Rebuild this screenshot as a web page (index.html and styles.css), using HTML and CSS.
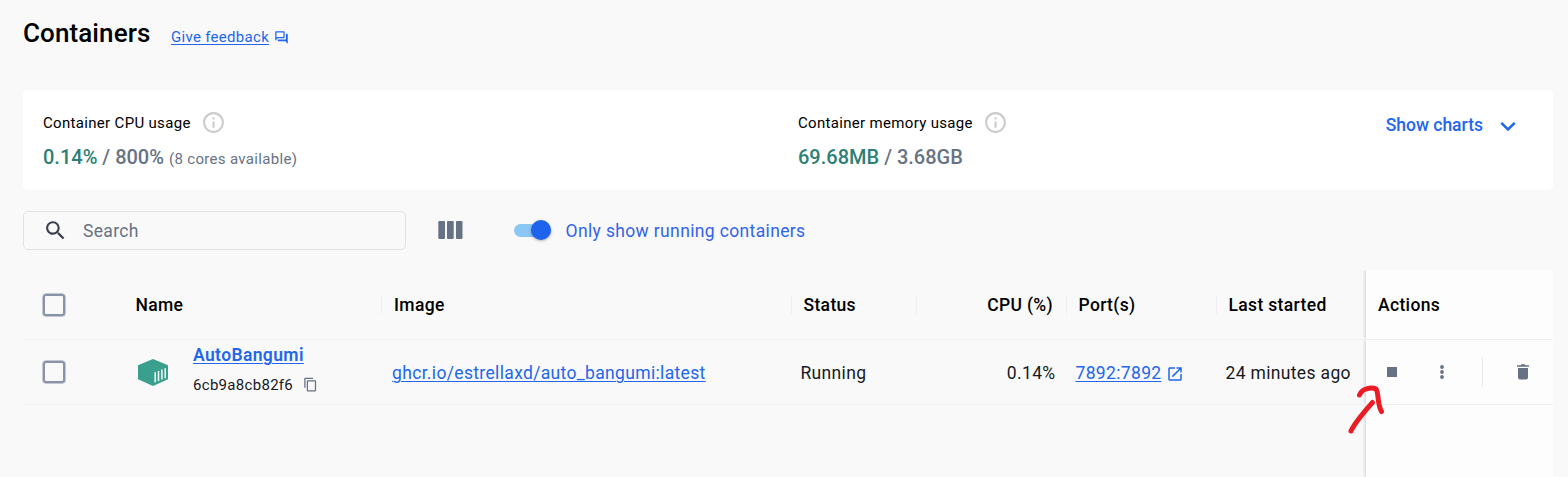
FILE: index.html
```html
<!DOCTYPE html>
<html lang="en">
<head>
<meta charset="utf-8">
<title>Containers</title>
<link rel="stylesheet" href="styles.css">
</head>
<body>
<main class="page">
  <header class="heading">
    <h1 class="title">Containers</h1>
    <a class="feedback" href="#">Give feedback</a>
    <svg class="feedback-icon" width="15" height="15" viewBox="0 0 24 24"><path d="M15 4v7H5.170L4 12.170V4h11m1-2H3c-.55 0-1 .45-1 1v14l4-4h10c.55 0 1-.45 1-1V3c0-.55-.45-1-1-1zm5 4h-2v9H6v2c0 .55.45 1 1 1h11l4 4V7c0-.55-.45-1-1-1z"/></svg>
  </header>

  <section class="usage">
    <div class="metric metric-cpu">
      <div class="metric-label"><span>Container CPU usage</span>
        <svg class="info" width="25" height="25" viewBox="0 0 24 24"><path d="M11 7h2v2h-2zm0 4h2v6h-2zm1-9C6.480 2 2 6.480 2 12s4.480 10 10 10 10-4.480 10-10S17.520 2 12 2zm0 18c-4.410 0-8-3.590-8-8s3.590-8 8-8 8 3.590 8 8-3.590 8-8 8z"/></svg>
      </div>
      <div class="metric-value"><span><b class="used">0.14%</b> / 800%</span><span class="cores">(8 cores available)</span></div>
    </div>
    <div class="metric">
      <div class="metric-label"><span>Container memory usage</span>
        <svg class="info" width="25" height="25" viewBox="0 0 24 24"><path d="M11 7h2v2h-2zm0 4h2v6h-2zm1-9C6.480 2 2 6.480 2 12s4.480 10 10 10 10-4.480 10-10S17.520 2 12 2zm0 18c-4.410 0-8-3.590-8-8s3.590-8 8-8 8 3.590 8 8-3.590 8-8 8z"/></svg>
      </div>
      <div class="metric-value"><span><b class="used">69.68MB</b> / 3.68GB</span></div>
    </div>
    <button class="show-charts"><span>Show charts</span>
      <svg width="25" height="25" viewBox="0 0 25 25"><path d="M5.300 9.800 12 16.500l6.700-6.700" fill="none" stroke="#2266ee" stroke-width="2.600"/></svg>
    </button>
  </section>

  <div class="toolbar">
    <div class="search">
      <svg width="25" height="25" viewBox="0 0 24 24"><path d="M15.500 14h-.79l-.28-.27C15.410 12.590 16 11.110 16 9.500 16 5.910 13.090 3 9.500 3S3 5.910 3 9.500 5.910 16 9.500 16c1.610 0 3.090-.59 4.230-1.570l.27.28v.79l5 4.990L20.490 19l-4.990-5zm-6 0C7.010 14 5 11.990 5 9.500S7.010 5 9.500 5 14 7.010 14 9.500 11.990 14 9.500 14z"/></svg>
      <span>Search</span>
    </div>
    <svg class="columns-icon" width="25" height="18" viewBox="0 0 25 18"><rect x=".3" width="6.700" height="18" rx="1"/><rect x="9" width="6.700" height="18" rx="1"/><rect x="18" width="6.500" height="18" rx="1"/></svg>
    <div class="switch"><span class="thumb"></span></div>
    <span class="switch-label">Only show running containers</span>
  </div>

  <div class="table">
    <div class="row head">
      <div class="cell check"><span class="box"></span></div>
      <div class="cell"><span>Name</span></div>
      <div class="cell sep"><span>Image</span></div>
      <div class="cell sep"><span>Status</span></div>
      <div class="cell sep right"><span>CPU (%)</span></div>
      <div class="cell sep"><span>Port(s)</span></div>
      <div class="cell sep"><span>Last started</span></div>
      <div class="cell pinned">Actions</div>
    </div>
    <div class="row body">
      <div class="cell check"><span class="box"></span></div>
      <div class="cell name-cell">
        <svg class="cube" width="30" height="27" viewBox="0 0 30 27"><path fill="#3aa08d" d="M15 0 30 6.300V20.300L15 27 0 20.300V6.300z"/><path stroke="#f9f9f9" stroke-width="1.500" d="M17.200 13.300v10M20.500 12v10M23.900 10.500v10M27.200 9.200v10"/></svg>
        <div class="name-lines">
          <a class="name" href="#">AutoBangumi</a>
          <div class="id-line"><span>6cb9a8cb82f6</span>
            <svg width="15" height="15" viewBox="0 0 24 24"><path d="M16 1H4c-1.100 0-2 .9-2 2v14h2V3h12V1zm3 4H8c-1.100 0-2 .9-2 2v14c0 1.100.9 2 2 2h11c1.100 0 2-.9 2-2V7c0-1.100-.9-2-2-2zm0 16H8V7h11v14z"/></svg>
          </div>
        </div>
      </div>
      <div class="cell text image-cell"><a href="#">ghcr.io/estrellaxd/auto_bangumi:latest</a></div>
      <div class="cell text"><span>Running</span></div>
      <div class="cell text right">0.14%</div>
      <div class="cell text ports"><a href="#">7892:7892</a>
        <svg width="18" height="18" viewBox="0 0 24 24"><path d="M19 19H5V5h7V3H5c-1.110 0-2 .9-2 2v14c0 1.100.89 2 2 2h14c1.100 0 2-.9 2-2v-7h-2v7zM14 3v2h3.590l-9.830 9.830 1.410 1.410L19 6.410V10h2V3h-7z"/></svg>
      </div>
      <div class="cell text"><span>24 minutes ago</span></div>
      <div class="cell pinned actions">
        <svg class="stop" width="10" height="10" viewBox="0 0 10 10"><rect width="10" height="10"/></svg>
        <svg class="more" width="4" height="14" viewBox="0 0 4 14"><circle cx="2" cy="2" r="1.900"/><circle cx="2" cy="7" r="1.900"/><circle cx="2" cy="12" r="1.900"/></svg>
        <span class="rule"></span>
        <svg class="trash" width="12" height="16" viewBox="0 0 12 16"><path d="M1 4h10v9.500c0 1.100-.7 1.900-1.800 1.900H2.800C1.700 15.400 1 14.600 1 13.500zM0 1.200h3.500L4.300.3h3.400l.8.900H12v1.600H0z"/></svg>
      </div>
    </div>
    <div class="row filler"><div class="cell pinned"></div></div>
  </div>
</main>
<svg class="arrow" width="40" height="54" viewBox="0 0 40 54"><path d="M5 47C9 38 18 28 26.500 18.500M13.500 11C16 4 26 3 30 5C33 9 31 20 35.500 27.500"/></svg>
</body>
</html>
```
FILE: styles.css
```css
* { box-sizing: border-box; }
body {
  margin: 0;
  height: 477px;
  overflow: hidden;
  background: #f9f9f9;
  color: #17191e;
  font-family: Roboto, sans-serif;
  font-size: 17.5px;
  white-space: nowrap;
}
a { color: #2266ee; text-decoration: underline; text-underline-offset: 2px; text-decoration-thickness: 1px; }
svg { display: block; flex: none; fill: #677285; }
.page { padding: 0 15px 0 23px; height: 477px; display: flex; flex-direction: column; }

.heading { height: 90px; display: flex; align-items: flex-start; padding-top: 18px; }
.title { margin: 0; font-size: 26px; line-height: 31px; font-weight: 500; color: #000; width: 148px; letter-spacing: .1px; }
.feedback { font-size: 15px; line-height: 20px; margin-top: 9px; letter-spacing: .3px; }
.feedback-icon { margin: 12px 0 0 5px; fill: #2266ee; }

.usage { height: 100px; background: #fff; border-radius: 5px; display: flex; padding: 20px; }
.metric-cpu { width: 755px; }
.metric-label { display: flex; align-items: center; height: 25px; gap: 10px; font-size: 15px; color: #000; letter-spacing: .32px; }
.info { fill: #cbcbcb; }
.metric-value { display: flex; align-items: baseline; margin-top: 9px; line-height: 26px; font-size: 20px; font-weight: 500; color: #677285; }
.used { font-weight: 500; color: #2e7f74; }
.cores { font-size: 15px; font-weight: 400; margin-left: 5px; letter-spacing: .33px; }
.show-charts { margin-left: auto; margin-right: 12px; border: 0; background: none; padding: 0; font: 500 17.5px Roboto, sans-serif; color: #2266ee; display: flex; gap: 13px; height: 30px; align-items: center; }

.toolbar { display: flex; align-items: center; height: 39px; margin-top: 21px; }
.search { width: 383px; height: 39px; border: 1px solid #e1e2e6; border-radius: 5px; display: flex; align-items: center; padding-left: 19px; gap: 15px; color: #677285; letter-spacing: .35px; }
.search svg { fill: #393f49; }
.columns-icon { margin: 0 0 1px 32px; }
.switch { width: 37px; height: 13px; border-radius: 7px; background: #8bc7f5; margin: 0 0 1px 51px; display: flex; justify-content: flex-end; align-items: center; }
.thumb { width: 20px; height: 20px; flex: none; border-radius: 50%; background: #1d63ed; box-shadow: 0 1px 3px rgba(0,0,0,.3); }
.switch-label { margin-left: 14.5px; color: #3363ec; letter-spacing: .36px; }

.table { margin-top: 20px; flex: 1; display: flex; flex-direction: column; letter-spacing: .34px; }
.row { display: grid; grid-template-columns: 100px 258px 409.5px 125px 150px 150px 150.5px 187px; }
.head { height: 70px; border-bottom: 1px solid #f1f1f2; font-weight: 500; color: #000; }
.body { height: 65px; border-bottom: 1px solid #efeff0; }
.filler { flex: 1; }
.cell { display: flex; align-items: center; padding-left: 12px; }
.head .cell:nth-child(2) { padding-left: 12.5px; }
.body .cell { padding-left: 10px; }
.body .text { padding-top: 2px; }
.body .image-cell { padding-left: 11px; }
.sep::before { content: ""; width: 1px; height: 18px; background: #efeff2; margin-left: -12px; margin-right: 12px; }
.right { justify-content: flex-end; padding-right: 12.5px; }
.sep.right::before { margin-right: auto; }
.body .right { padding-right: 10px; }
.cell.check, .body .cell.check { padding-left: 20px; }
.box { width: 22px; height: 22px; border: 2px solid #8993a8; border-radius: 3px; box-shadow: 0 0 0 .5px #8993a8; }
.pinned { grid-column: 8; background: #fdfdfd; padding-left: 12px; clip-path: inset(0 0 0 -8px); box-shadow: -1px 0 3px rgba(0,0,0,.17); }
.body .name-cell { padding-left: 15px; gap: 25px; }
.name-lines { margin-top: -4px; }
.name { font-weight: 600; line-height: 22px; display: block; letter-spacing: .38px; }
.id-line { display: flex; align-items: center; gap: 10px; line-height: 22px; font-size: 15px; margin-top: 8px; letter-spacing: .3px; }
.id-line svg { margin-bottom: 2px; }
.ports { gap: 5px; }
.ports svg { fill: #2266ee; margin-top: 2px; }
.body .actions { padding-left: 21px; }
.more { margin-left: 43px; }
.rule { width: 1px; height: 30px; background: #e9eaed; margin-left: 38px; }
.trash { margin-left: 34px; }
.arrow { position: absolute; left: 1346px; top: 384px; fill: none; stroke: #ec1c24; stroke-width: 5; stroke-linecap: round; stroke-linejoin: round; }
```
